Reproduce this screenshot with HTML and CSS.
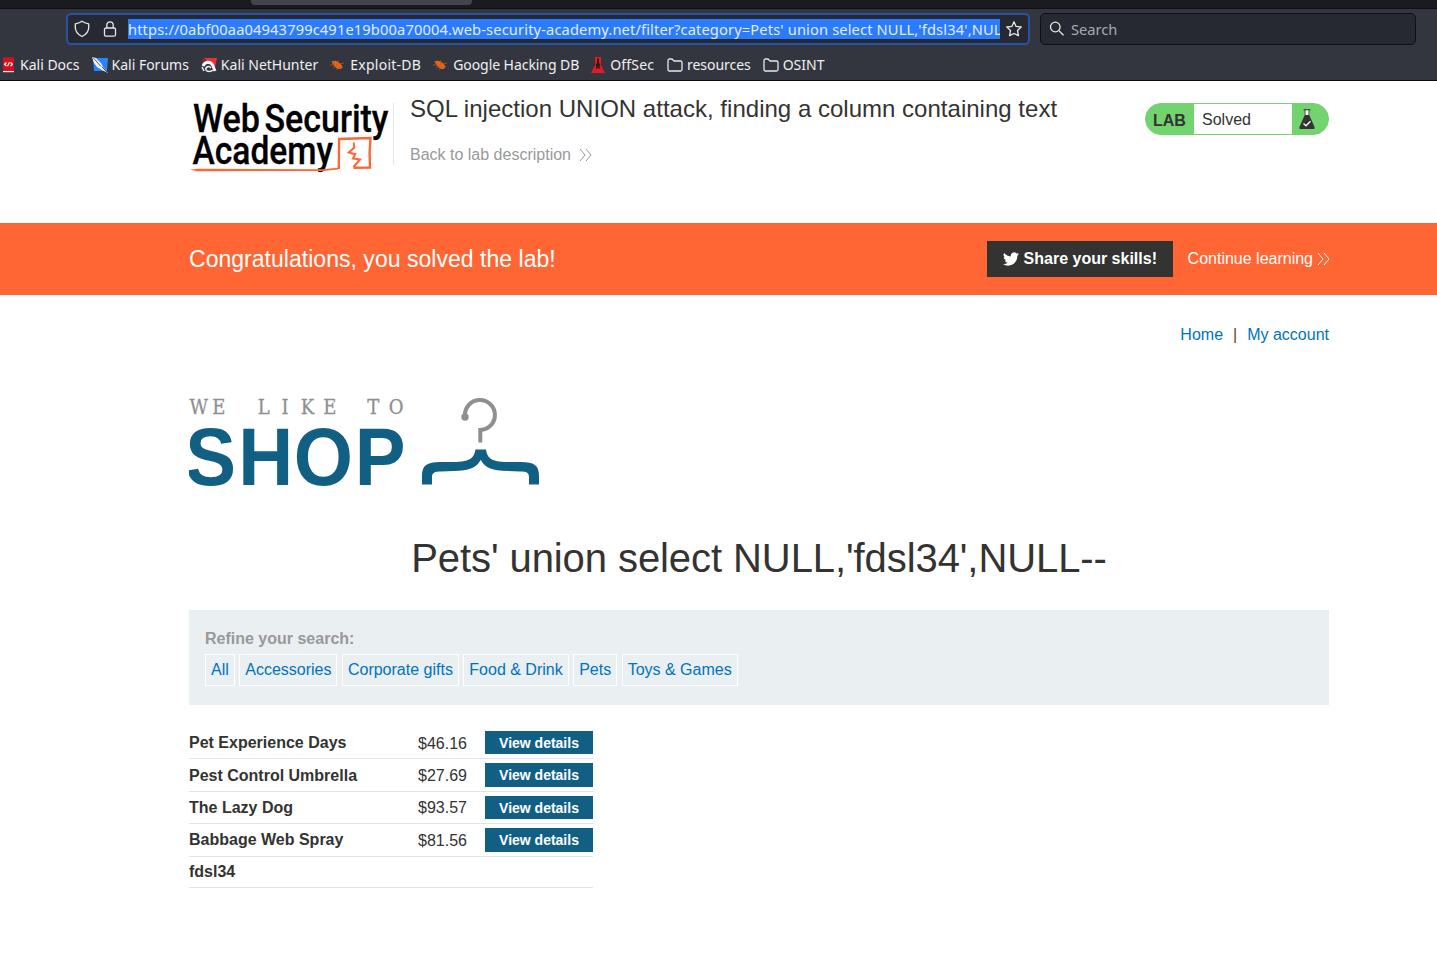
FILE: index.html
```
<!DOCTYPE html>
<html lang="en">
<head>
<meta charset="utf-8">
<title>SQL injection UNION attack, finding a column containing text</title>
<link rel="stylesheet" href="styles.css">
</head>
<body>
<div class="browser">
  <div class="tabstrip"><div class="tab"></div></div>
  <div class="navbar">
    <div class="urlbar">
      <svg class="i-shield" width="16" height="18" viewBox="0 0 16 18"><path d="M8 1.200c2 1.500 4.200 2.100 6.700 2.600v3.700c0 4.200-2.900 7.100-6.700 9C4.200 14.600 1.300 11.700 1.300 7.500V3.800C3.800 3.300 6 2.700 8 1.200z"/></svg>
      <svg class="i-lock" width="14" height="18" viewBox="0 0 14 18"><rect x="1.500" y="8" width="11" height="8.200" rx="1.500"/><path d="M3.800 8V5a3.200 3.200 0 0 1 6.400 0v3"/></svg>
      <div class="url">https://0abf00aa04943799c491e19b00a70004.web-security-academy.net/filter?category=Pets' union select NULL,'fdsl34',NUL</div>
      <svg class="i-star" width="16" height="16" viewBox="0 0 16 16"><path d="M8 .8l2.100 4.600 5.100.6-3.700 3.400.9 5.300L8 12.500l-4.400 2.200.9-5.300L.8 6l5.100-.6z"/></svg>
    </div>
    <div class="search">
      <svg width="16" height="16" viewBox="0 0 16 16"><circle cx="6.300" cy="6" r="4.800"/><path d="M9.900 9.600l4.600 4.600"/></svg>
      <span>Search</span>
    </div>
  </div>
  <div class="bookmarks">
    <span class="bm bm-docs"><svg width="14" height="16" viewBox="0 0 14 16"><path fill="#263a5c" d="M0 1h2v14H0z"/><path fill="#d3101c" d="M1 .5h11v13.500H1z"/><path fill="#eee" d="M1 14h11v1.200H1z"/><path class="line" d="M4.500 5.500l-2 1.700 2 1.800M8.500 5.500l2 1.700-2 1.800M5.500 9.200l2-3.900"/></svg>Kali Docs</span>
    <span class="bm bm-forums"><svg width="16" height="16" viewBox="0 0 16 16"><path fill="#2584ff" d="M1 1h15l-1 13H2z"/><path fill="#f4f6fa" d="M0 0l4 1 5 5 2 4 5 6-6-3-5-3-3-4z"/><path d="M1 .5l8 9M10 10l5 5" stroke="#343746" stroke-width=".8" fill="none"/></svg>Kali Forums</span>
    <span class="bm bm-hunter"><svg width="16" height="16" viewBox="0 0 16 16"><path fill="#e9303c" d="M3 1h13l-2 10-3-4-5-3z"/><path fill="#a51b28" d="M1 2h4L2 7z"/><path d="M2 9C4 4 10 4 12 9l2 5" stroke="#fff" stroke-width="2.800" fill="none"/><path d="M12 13c-2 2-6 2-7 0-1-3 3-5 5-2M1 10l2 4" stroke="#f2f2f2" stroke-width="1.500" fill="none"/></svg>Kali NetHunter</span>
    <span class="bm bm-exploit"><svg width="14" height="14" viewBox="0 0 14 14"><path fill="#ed6415" d="M1.500 3.500c3-1.500 6-.5 8.500 2 3 2 3 5 0 5.500-3 .4-6-2.500-8.500-7.500z"/><path class="legs" d="M0 7h5L3 3M3 10l4-2 1-6M6 12l3-3h4M9 6l5-1"/></svg>Exploit-DB</span>
    <span class="bm bm-google"><svg width="14" height="14" viewBox="0 0 14 14"><path fill="#ed6415" d="M1.500 3.500c3-1.500 6-.5 8.500 2 3 2 3 5 0 5.500-3 .4-6-2.500-8.500-7.500z"/><path class="legs" d="M0 7h5L3 3M3 10l4-2 1-6M6 12l3-3h4M9 6l5-1"/></svg>Google Hacking DB</span>
    <span class="bm bm-off"><svg width="14" height="16" viewBox="0 0 14 16"><path fill="#e31b25" d="M4 0h6v8l4 8H0l4-8z"/><path fill="#31151c" d="M6 1.500h2V6l1.500 2-1.200 1.500L9.500 12 7 11l-2.500 1 1.200-2.500L4.500 8 6 6z"/></svg>OffSec</span>
    <span class="bm bm-res"><svg width="16" height="14" viewBox="0 0 16 14"><path class="line" d="M1 11.500v-9Q1 1 2.500 1H5l2 2h6.500Q15 3 15 4.500v7q0 1.500-1.500 1.500h-11Q1 13 1 11.500z"/></svg>resources</span>
    <span class="bm bm-osint"><svg width="16" height="14" viewBox="0 0 16 14"><path class="line" d="M1 11.500v-9Q1 1 2.500 1H5l2 2h6.500Q15 3 15 4.500v7q0 1.500-1.500 1.500h-11Q1 13 1 11.500z"/></svg>OSINT</span>
  </div>
</div>

<header class="lab-header container">
  <svg class="logo" width="200" height="72" viewBox="189 102 200 72">
    <g class="logo-text">
      <text x="193" y="131.500" textLength="67" lengthAdjust="spacingAndGlyphs">Web</text>
      <text x="264.500" y="131.500" textLength="124" lengthAdjust="spacingAndGlyphs">Security</text>
      <text x="192.500" y="164.300" textLength="140.500" lengthAdjust="spacingAndGlyphs">Academy</text>
    </g>
    <path fill="#ff6633" d="M190 169.400l8-.7 125 .5 15-1.500v1.800l-15 1.500-126 .2z"/>
    <path class="mark" d="M338.800 169l.3-30 31.400-1-.9 15 .4 14.500-16.500.3"/>
    <path class="bolt" d="M353.800 142.500l.5 5-5.500 5 6.500 1.700-2.300 4.300 7 1-6.500 7.500"/>
  </svg>
  <div class="title-block">
    <h2>SQL injection UNION attack, finding a column containing text</h2>
    <a class="back">Back to lab description <svg width="13" height="14" viewBox="0 0 13 14"><path d="M1 1l5 6-5 6M7 1l5 6-5 6"/></svg></a>
  </div>
  <div class="status">
    <b>LAB</b><span>Solved</span>
    <svg width="36" height="30" viewBox="0 0 36 30"><path fill="#fff" d="M12.500 6h5v6h-5z"/><path fill="#333332" fill-rule="evenodd" d="M11.500 5.200h7v1h-1v5.300l5 11.500q.7 2-1.500 2h-12q-2.200 0-1.500-2l5-11.500V6.200h-1zM13.500 6.200V11h3V6.200z"/><path d="M11.500 19.500l2.500 2.300 4.500-4.500" stroke="#fff" stroke-width="1.300" fill="none"/></svg>
  </div>
</header>

<section class="banner"><div class="container banner-row">
  <h4>Congratulations, you solved the lab!</h4>
  <div class="banner-links">
    <a class="share"><svg width="16" height="14" viewBox="0 0 24 20"><path fill="#fff" d="M24 2.400a10 10 0 0 1-2.800.8A5 5 0 0 0 23.300.5a10 10 0 0 1-3.100 1.200 4.900 4.900 0 0 0-8.400 4.500A14 14 0 0 1 1.700 1a4.900 4.900 0 0 0 1.500 6.600A5 5 0 0 1 1 7v.1A4.900 4.900 0 0 0 4.900 12a5 5 0 0 1-2.200.1 4.900 4.900 0 0 0 4.600 3.400A10 10 0 0 1 0 17.500 14 14 0 0 0 7.500 20c9.100 0 14-7.500 14-14v-.7A10 10 0 0 0 24 2.400z"/></svg>Share your skills!</a>
    <a class="continue">Continue learning <svg width="13" height="14" viewBox="0 0 13 14"><path d="M1 1l5 6-5 6M7 1l5 6-5 6"/></svg></a>
  </div>
</div></section>

<main class="container">
  <nav class="account"><a>Home</a><span>|</span><a>My account</a></nav>
  <svg class="shop" width="351" height="90" viewBox="189 397 351 90">
    <text class="like" transform="translate(189.500 414) scale(.88 1)" x="0 26 77.500 104.500 126.500 152 202 226.500">WELIKETO</text>
    <text class="shop-word" transform="translate(189 485) scale(.94 1)" x="-4.100 52.300 111.500 176.400">SHOP</text>
    <circle cx="465" cy="417" r="3.700" fill="#8f8f8f"/>
    <path class="hook" d="M465 416.500a15 15 0 1 1 15.300 13.500v12.500"/>
    <path fill="#125f84" d="M475.500 449.500h10.500c1 7 4 12 18 12.500h17c13 0 18 3 18 14v8.500h-10v-7c0-5-2-6-9-6l-18-.7c-13-.8-18-5-21.300-11-3.300 6-8.300 10.200-21.300 11l-18 .7c-7 0-9.400 1-9.400 6v7h-10V476c0-11 5-13.500 18-14h17c14-.5 17.500-5.500 18.500-12.500z"/>
  </svg>
  <h1>Pets' union select NULL,'fdsl34',NULL--</h1>
  <section class="filters">
    <label>Refine your search:</label>
    <div class="chips"><a>All</a> <a>Accessories</a> <a>Corporate gifts</a> <a>Food &amp; Drink</a> <a>Pets</a> <a>Toys &amp; Games</a></div>
  </section>
  <div class="products">
    <div class="row"><b>Pet Experience Days</b><span>$46.16</span><a>View details</a></div>
    <div class="row"><b>Pest Control Umbrella</b><span>$27.69</span><a>View details</a></div>
    <div class="row"><b>The Lazy Dog</b><span>$93.57</span><a>View details</a></div>
    <div class="row"><b>Babbage Web Spray</b><span>$81.56</span><a>View details</a></div>
    <div class="row"><b>fdsl34</b></div>
  </div>
</main>
</body>
</html>
```
FILE: styles.css
```
* { box-sizing: border-box; }
body { margin: 0; background: #fff; color: #333332; font: 16px/20px "Liberation Sans", Arial, sans-serif; overflow: hidden; }
h1, h2, h4 { margin: 0; font-weight: 400; }
svg { flex: none; }
.container { width: 1140px; margin-left: 189px; }

.browser { height: 81px; background: #33363e; border-bottom: 1px solid #0d0610; color: #f0f0f1; font: 14.67px/20px "Noto Sans", sans-serif; overflow: hidden; }
.tabstrip { height: 9px; background: #1a1b20; border-bottom: 1px solid #0f1014; }
.tab { width: 221px; height: 5px; margin-left: 251px; background: #42454e; border-radius: 0 0 4px 4px; }
.navbar { display: flex; gap: 10px; padding: 4px 21px 0 66px; }
.navbar svg, .line { fill: none; stroke: #e8e8ea; stroke-width: 1.3; stroke-linejoin: round; }
.urlbar { display: flex; align-items: center; width: 964px; height: 32px; padding-left: 6px; background: #262832; border: 2px solid #2852a2; border-radius: 5px; }
.i-lock { margin-left: 13px; }
.url { width: 872px; height: 20px; margin: 0 6px 0 11px; overflow: hidden; white-space: nowrap; background: #2a7bff; color: #e3edff; letter-spacing: .135px; }
.search { display: flex; align-items: center; width: 376px; height: 32px; padding-left: 8px; gap: 6px; background: #262832; border: 1px solid #0e1015; border-radius: 5px; color: #a9aab0; }
.bookmarks { display: flex; height: 35px; padding: 10px 0 0 2px; gap: 12px; white-space: nowrap; font-size: 14px; }
.bm { display: flex; align-items: center; height: 20px; gap: 4px; }
.bm-exploit { gap: 6px; letter-spacing: .25px; }
.bm-google { gap: 6px; letter-spacing: -.06px; }
.bm-off { gap: 5px; letter-spacing: .15px; }
.bm-res { margin-left: 1px; letter-spacing: -.05px; }
.legs { fill: none; stroke: #b45a24; stroke-width: .7; }

.lab-header { display: flex; height: 142px; padding-top: 21px; }
.logo { overflow: visible; }
.logo-text { font: 500 38px Roboto, sans-serif; fill: #000; stroke: #000; stroke-width: .3; }
.mark { fill: none; stroke: #ff6633; stroke-width: 2.400; }
.bolt { fill: none; stroke: #ff6633; stroke-width: 2; }
.title-block { margin: 1px 0 0 4px; height: 62px; padding-left: 16px; border-left: 1px solid #e5e5e5; }
.title-block h2 { font-size: 24px; line-height: 28px; margin-top: -8px; white-space: nowrap; letter-spacing: .017px; }
.back { display: flex; align-items: center; gap: 8px; margin-top: 22px; color: #999; }
.back path, .continue path { fill: none; stroke: currentColor; }
.status { display: flex; width: 184px; height: 32px; margin: 1px 0 0 auto; border: 1px solid #72d36f; border-radius: 16px; background: #72d36f; overflow: hidden; line-height: 32px; }
.status b { width: 48px; padding-left: 7px; line-height: 34px; }
.status span { width: 98px; flex: none; padding-left: 8px; background: #fff; }

.banner { height: 72px; background: #ff6633; color: #fff; }
.banner-row { display: flex; align-items: center; justify-content: space-between; height: 72px; }
.banner h4 { font-size: 23px; line-height: 28px; letter-spacing: .028px; }
.banner-links { display: flex; align-items: center; gap: 15px; margin-right: -1px; }
.share { display: flex; align-items: center; gap: 5px; width: 186px; height: 36px; padding-left: 16px; background: #333332; font-weight: 700; }
.continue { display: flex; align-items: center; gap: 4px; }

.account { display: flex; justify-content: flex-end; gap: 10px; padding-top: 30px; }
.account a, .chips a { color: #0073bb; }
.account span { color: #693818; }
.shop { display: block; margin-top: 52px; }
.like { font: 20.500px "DejaVu Serif", serif; fill: #8f8f8f; stroke: #8f8f8f; stroke-width: .3; }
.shop-word { font: 700 81px "Liberation Sans", Arial, sans-serif; fill: #125f84; }
.hook { fill: none; stroke: #8f8f8f; stroke-width: 4; }
h1 { margin-top: 48px; text-align: center; font-size: 40px; line-height: 46px; letter-spacing: -.08px; }
.filters { height: 95px; margin-top: 29px; padding: 19px 16px 0; background: #eaeff2; }
.filters label { display: block; height: 25px; font-weight: 700; color: #999; }
.chips a { display: inline-block; height: 32px; padding: 0 5px; border: 1px solid #fff; line-height: 30px; }
.products { width: 404px; margin-top: 22px; }
.row { display: grid; grid-template-columns: 229px 67px 108px; height: 32px; padding-top: 4px; border-bottom: 1px solid #e4e4e4; }
.row b, .row span { line-height: 24px; }
.row:nth-child(even) { height: 33px; }
.row:nth-child(2) b, .row:nth-child(1) span, .row:nth-child(2) span, .row:nth-child(4) span { line-height: 26px; }
.row a { height: 23px; background: #125f84; color: #fff; font-size: 14px; font-weight: 700; line-height: 24px; text-align: center; }
.row:nth-child(even) a { height: 24px; }
.row:last-child { height: 31px; padding-top: 3px; }
```
